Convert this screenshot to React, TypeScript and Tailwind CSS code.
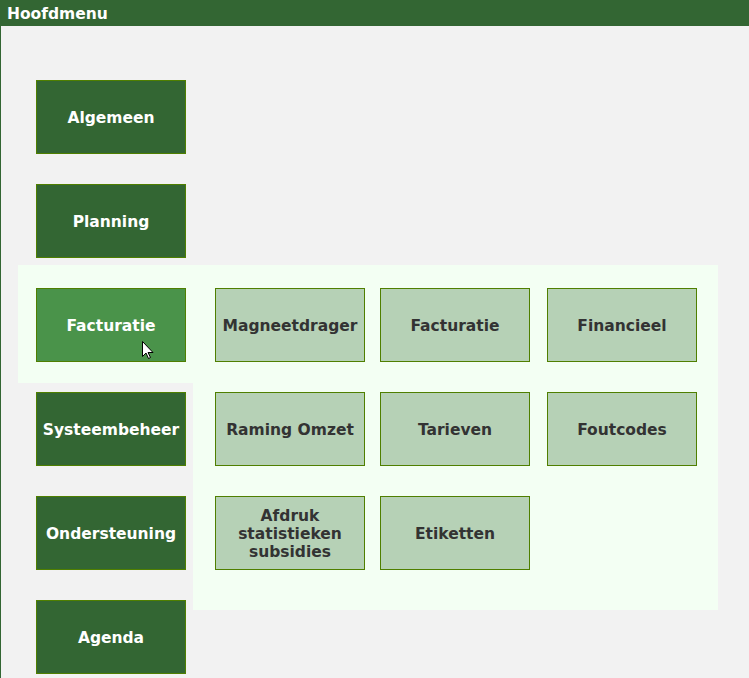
import React from 'react';

const mainItems = ['Algemeen', 'Planning', 'Facturatie', 'Systeembeheer', 'Ondersteuning', 'Agenda'];
const subItems = ['Magneetdrager', 'Facturatie', 'Financieel', 'Raming Omzet', 'Tarieven', 'Foutcodes', 'Afdruk statistieken subsidies', 'Etiketten'];
const activeIndex = 2;

function Cursor() {
  return (
    <svg className="absolute left-[105px] top-[52px]" width="13" height="19" viewBox="0 0 13 19">
      <path d="M0.5 0.5 L0.5 15.5 L4 12 L6.5 17.5 L8.5 16.5 L6 11.5 L11 11.5 Z" fill="#fff" stroke="#000" strokeWidth="1" />
    </svg>
  );
}

function MenuButton({ label, active }: { label: string; active?: boolean }) {
  return (
    <div
      className={`relative w-[150px] h-[74px] border border-[#4f7f00] flex items-center justify-center pt-[3px] text-white font-bold text-[15.5px] ${
        active ? 'bg-[#4a934a]' : 'bg-[#336633]'
      }`}
    >
      {label}
      {active && <Cursor />}
    </div>
  );
}

export default function App() {
  return (
    <div className="min-h-[678px] bg-[#f2f2f2] font-['DejaVu_Sans',Verdana,sans-serif]">
      <div className="h-[26px] bg-[#336633] text-white font-bold text-[15.5px] leading-[26px] pt-[1px] px-[7px]">Hoofdmenu</div>
      <div className="flex border-l border-[#336633] pl-[35px] pt-[54px] pb-[4px]">
        <div className="flex flex-col gap-[30px]">
          {mainItems.map((item, i) =>
            i === activeIndex ? (
              <div
                key={item}
                className="-mx-[18px] -mr-[7px] pl-[18px] pr-[7px] -mt-[23px] pt-[23px] -mb-[21px] pb-[21px] bg-[#f3fff3]"
              >
                <MenuButton label={item} active />
              </div>
            ) : (
              <MenuButton key={item} label={item} />
            )
          )}
        </div>
        <div className="ml-[7px] mt-[185px] self-start w-[525px] bg-[#f3fff3] pl-[22px] pt-[23px] pb-[40px]">
          <div className="grid grid-cols-[165px_167px_150px] gap-y-[30px]">
            {subItems.map((item) => (
              <div
                key={item}
                className="w-[150px] h-[74px] border border-[#4f7f00] bg-[#b6d1b6] flex items-center justify-center text-center text-[#333333] font-bold text-[15.5px] leading-[18px] px-[6px] pt-[2px]"
              >
                {item}
              </div>
            ))}
          </div>
        </div>
      </div>
    </div>
  );
}
